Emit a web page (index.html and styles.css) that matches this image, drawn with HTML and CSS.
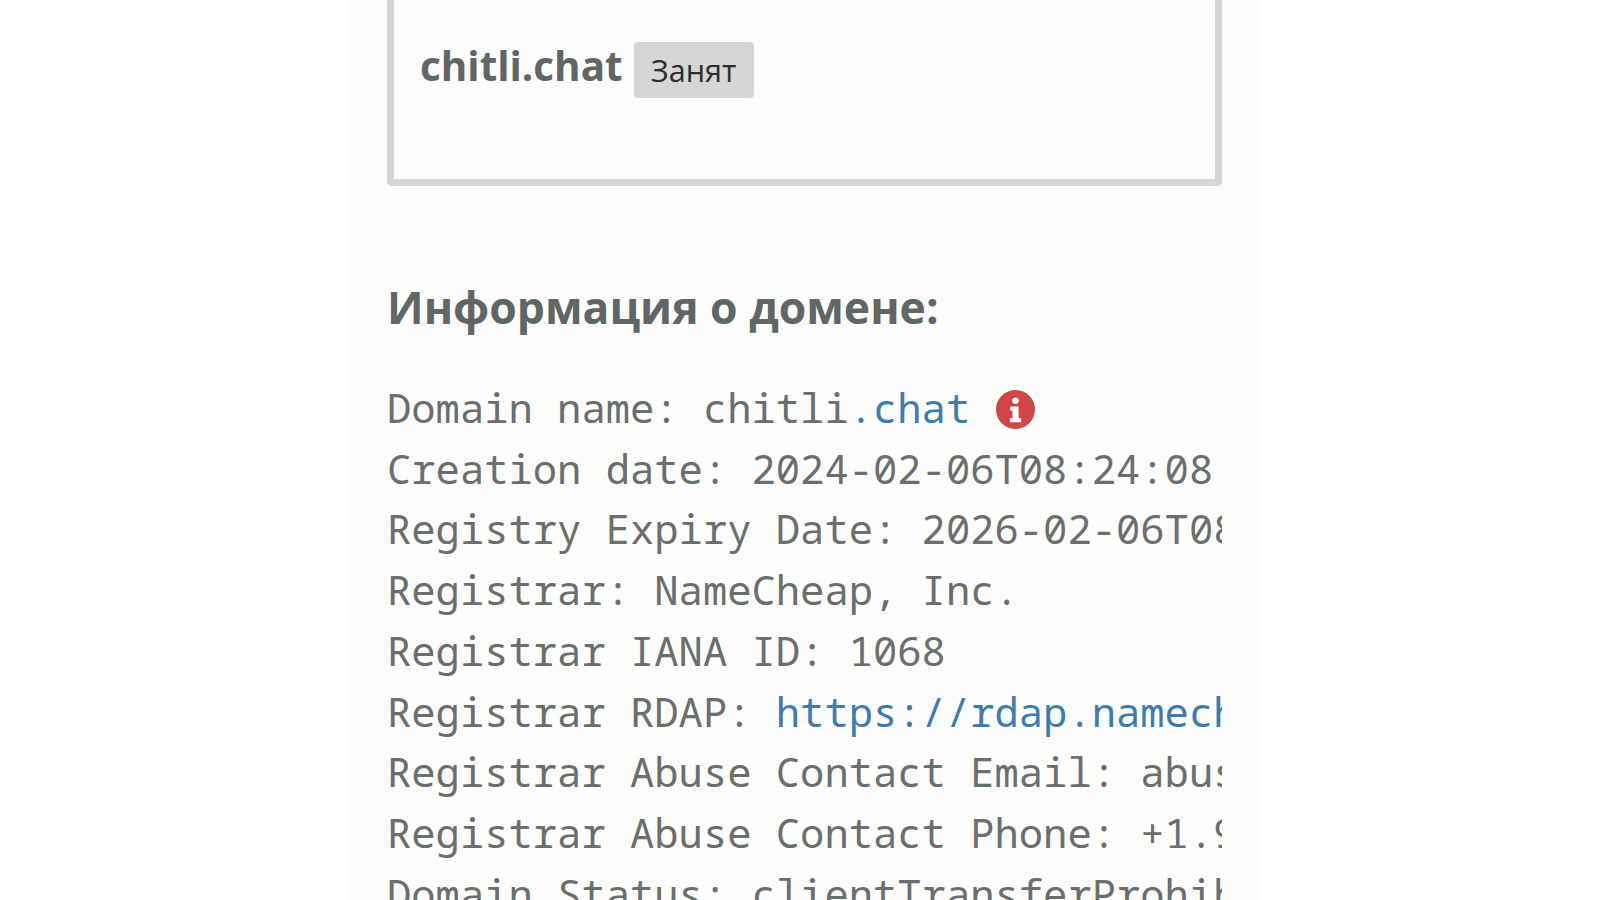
FILE: index.html
```html
<!DOCTYPE html>
<html lang="ru">
<head>
<meta charset="utf-8">
<title>chitli.chat</title>
<link rel="stylesheet" href="styles.css">
</head>
<body>
<main class="column">
  <section class="result-box">
    <span class="domain">chitli.chat</span>
    <span class="badge">Занят</span>
  </section>
  <h2 class="info-title">Информация о домене:</h2>
  <pre class="whois">Domain name: chitli<a class="link" href="#">.chat</a> <svg class="info-icon" viewBox="0 0 38 38" aria-hidden="true"><circle cx="19" cy="19" r="19" fill="#d04545"/><circle cx="19" cy="10.500" r="3.200" fill="#fff"/><path d="M14 16h8v11.500h2.500v4h-11v-4h2.500v-7.500h-2.500z" fill="#fff"/></svg>
Creation date: 2024-02-06T08:24:08
Registry Expiry Date: 2026-02-06T08:24:08
Registrar: NameCheap, Inc.
Registrar IANA ID: 1068
Registrar RDAP: <a class="link" href="#">https://rdap.namecheap.com/</a>
Registrar Abuse Contact Email: abuse@namecheap.com
Registrar Abuse Contact Phone: +1.9854014545
Domain Status: clientTransferProhibited</pre>
</main>
</body>
</html>
```

FILE: styles.css
```css
html, body {
  margin: 0;
  height: 900px;
  overflow: hidden;
  background: #ffffff;
}

.column {
  box-sizing: border-box;
  width: 912px;
  height: 900px;
  margin-left: 348px;
  padding: 0 38px 0 39px;
  overflow: hidden;
  background: #fcfcfa;
}

.result-box {
  box-sizing: border-box;
  display: flex;
  align-items: flex-start;
  gap: 11px;
  width: 835px;
  height: 186px;
  padding: 42px 26px 0;
  border: 7px solid #d6d6d6;
  border-top: 0;
  border-radius: 0 0 5px 5px;
}

.domain {
  font-family: "Open Sans", "Noto Sans", sans-serif;
  font-size: 40.400px;
  font-weight: 700;
  line-height: 48px;
  color: #5f6665;
}

.badge {
  box-sizing: border-box;
  display: block;
  width: 120px;
  height: 56px;
  border-radius: 4px;
  background: #d6d6d6;
  font-family: "Open Sans", "Noto Sans", sans-serif;
  font-size: 30.600px;
  line-height: 56px;
  text-align: center;
  color: #2b2d2d;
}

.info-title {
  margin: 91px 0 0;
  font-family: "Open Sans", "Noto Sans", sans-serif;
  font-size: 44.500px;
  font-weight: 700;
  line-height: 60px;
  color: #5f6665;
}

.whois {
  margin: 41px 0 0;
  overflow: hidden;
  font-family: "Noto Sans Mono", "DejaVu Sans Mono", "Liberation Mono", monospace;
  font-size: 40.500px;
  line-height: 60.700px;
  color: #6a6e6d;
}

.link {
  color: #3f7cab;
  text-decoration: none;
}

.info-icon {
  display: inline-block;
  width: 39px;
  height: 39px;
  margin-left: 1px;
  vertical-align: -6px;
}
```
